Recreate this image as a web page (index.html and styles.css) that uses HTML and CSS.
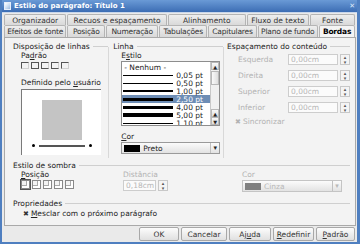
FILE: index.html
```html
<!DOCTYPE html>
<html lang="pt">
<head>
    <meta charset="UTF-8">
    <title>Estilo do parágrafo</title>
    <link rel="stylesheet" href="styles.css">
</head>
<body>
    <div class="window">
        <div class="titlebar">
            <span class="app-icon"></span>
            <span class="title">Estilo do parágrafo: Título 1</span>
            <span class="close">✕</span>
        </div>
        <div class="dialog">
            <div class="tabs">
                <div class="tab-row">
                    <div class="tab w1">Organizador</div>
                    <div class="tab w2">Recuos e espaçamento</div>
                    <div class="tab w3">Alinhamento</div>
                    <div class="tab w4">Fluxo de texto</div>
                    <div class="tab w5">Fonte</div>
                </div>
                <div class="tab-row">
                    <div class="tab v1">Efeitos de fonte</div>
                    <div class="tab v2">Posição</div>
                    <div class="tab v3">Numeração</div>
                    <div class="tab v4">Tabulações</div>
                    <div class="tab v5">Capitulares</div>
                    <div class="tab v6">Plano de fundo</div>
                    <div class="tab v7 active">Bordas</div>
                </div>
            </div>
            <div class="panel">
                <div class="top">
                    <div class="col col-lines">
                        <div class="group-title">Disposição de linhas</div>
                        <div class="sub">Pa<u>d</u>rão</div>
                        <div class="presets">
                            <span class="preset p1"></span>
                            <span class="preset p2"></span>
                            <span class="preset p3"></span>
                            <span class="preset p4"></span>
                            <span class="preset p5"></span>
                        </div>
                        <div class="sub">Definido pelo <u>u</u>suário</div>
                        <div class="preview">
                            <div class="paper"></div>
                            <div class="bottom-line"><i></i><b></b><i></i></div>
                        </div>
                    </div>
                    <div class="col col-style">
                        <div class="group-title">Linha</div>
                        <div class="sub">E<u>s</u>tilo</div>
                        <div class="listbox">
                            <div class="items">
                                <div class="item none">- Nenhum -</div>
                                <div class="item"><span class="ln" style="height:1px"></span><span>0,05 pt</span></div>
                                <div class="item"><span class="ln" style="height:1px"></span><span>0,50 pt</span></div>
                                <div class="item"><span class="ln" style="height:2px"></span><span>1,00 pt</span></div>
                                <div class="item sel"><span class="ln" style="height:3px"></span><span>2,50 pt</span></div>
                                <div class="item"><span class="ln" style="height:3px"></span><span>4,00 pt</span></div>
                                <div class="item"><span class="ln" style="height:4px"></span><span>5,00 pt</span></div>
                                <div class="item"><span class="ln" style="height:1px"></span><span>1,10 pt</span></div>
                            </div>
                            <div class="vscroll">
                                <span class="arr">▲</span>
                                <span class="thumb"></span>
                                <span class="grow"></span>
                                <span class="arr">▲</span>
                                <span class="arr">▼</span>
                            </div>
                        </div>
                        <div class="sub"><u>C</u>or</div>
                        <div class="combo">
                            <span class="swatch black"></span>
                            <span class="combo-text">Preto</span>
                            <span class="drop">▾</span>
                        </div>
                    </div>
                    <div class="col col-spacing">
                        <div class="group-title">Espaçamento do conteúdo</div>
                        <div class="field"><span class="lbl">Esquerda</span><span class="spin"><span class="val">0,00cm</span><span class="btns">▴<br>▾</span></span></div>
                        <div class="field"><span class="lbl">Direita</span><span class="spin"><span class="val">0,00cm</span><span class="btns">▴<br>▾</span></span></div>
                        <div class="field"><span class="lbl">Superior</span><span class="spin"><span class="val">0,00cm</span><span class="btns">▴<br>▾</span></span></div>
                        <div class="field"><span class="lbl">Inferior</span><span class="spin"><span class="val">0,00cm</span><span class="btns">▴<br>▾</span></span></div>
                        <div class="sync"><span class="check">✖</span>Sincronizar</div>
                    </div>
                </div>

                <div class="group-title wide">Estilo de sombra</div>
                <div class="shadow">
                    <div class="shadow-pos">
                        <div class="sub"><u>P</u>osição</div>
                        <div class="presets">
                            <span class="preset sh active"></span>
                            <span class="preset sh"></span>
                            <span class="preset sh"></span>
                            <span class="preset sh"></span>
                            <span class="preset sh"></span>
                        </div>
                    </div>
                    <div class="shadow-dist">
                        <div class="sub grey">Distância</div>
                        <span class="spin small"><span class="val">0,18cm</span><span class="btns">▴<br>▾</span></span>
                    </div>
                    <div class="shadow-color">
                        <div class="sub grey">Cor</div>
                        <div class="combo disabled">
                            <span class="swatch grey-sw"></span>
                            <span class="combo-text">Cinza</span>
                            <span class="drop">▾</span>
                        </div>
                    </div>
                </div>

                <div class="group-title wide">Propriedades</div>
                <div class="merge"><span class="check dark">✖</span><u>M</u>esclar com o próximo parágrafo</div>
            </div>
            <div class="buttons">
                <button class="btn ok">OK</button>
                <button class="btn b-cancel">Cancelar</button>
                <button class="btn">Aj<u>u</u>da</button>
                <button class="btn b-reset"><u>R</u>edefinir</button>
                <button class="btn b-default"><u>P</u>adrão</button>
            </div>
        </div>
    </div>
</body>
</html>
```

FILE: styles.css
```css
* {
    box-sizing: border-box;
}

body {
    margin: 0;
    width: 360px;
    height: 244px;
    overflow: hidden;
    font-family: "DejaVu Sans", sans-serif;
    font-size: 7.5px;
    color: #222;
}

u {
    text-decoration: underline;
}

.window {
    width: 360px;
    height: 244px;
    display: flex;
    flex-direction: column;
    background: #4f7fc0;
    padding: 0 3px 2px 2px;
}

.titlebar {
    height: 12px;
    display: flex;
    align-items: center;
    gap: 3px;
    padding-left: 2px;
    background: linear-gradient(#6a9ad6, #3c6db4);
    color: #fff;
    font-weight: bold;
    font-size: 7px;
}

.app-icon {
    width: 7px;
    height: 8px;
    background: linear-gradient(135deg, #fff 0%, #cfe0f4 50%, #9cb9de 100%);
    border: 1px solid #e6eefa;
}

.title {
    flex: 1;
}

.close {
    font-size: 7px;
    color: #dde8f7;
    padding-right: 2px;
}

.dialog {
    flex: 1;
    display: flex;
    flex-direction: column;
    background: #eaeaea;
    border-top: 1px solid #c8d6ea;
}

/* tabs */
.tabs {
    padding: 0 1px 0 2px;
}

.tab-row {
    display: flex;
    height: 12px;
}

.tab {
    flex-basis: 0;
    min-width: 0;
    overflow: hidden;
    text-align: center;
    line-height: 11px;
    background: linear-gradient(#eeeeee, #d9d9d9);
    border: 1px solid #b4b4b4;
    border-bottom: none;
    border-radius: 2px 2px 0 0;
    margin-right: 1px;
    white-space: nowrap;
    color: #333;
}

.tab-row:first-child .tab {
    margin-top: 1px;
}

.w1 { flex-grow: 62; }
.w2 { flex-grow: 100; }
.w3 { flex-grow: 78; }
.w4 { flex-grow: 62; }
.w5 { flex-grow: 44; }

.v1 { flex-grow: 64; }
.v2 { flex-grow: 38; }
.v3 { flex-grow: 53; }
.v4 { flex-grow: 49; }
.v5 { flex-grow: 49; }
.v6 { flex-grow: 62; }
.v7 { flex-grow: 36; }

.tab-row:last-child .tab {
    letter-spacing: -0.2px;
}

.tab.active {
    background: #f4f4f4;
    font-weight: bold;
    color: #000;
}

.panel {
    height: 189px;
    background: #f3f3f3;
    border: 1px solid #a9a9a9;
    margin: 0 1px 0 2px;
    padding: 3px 5px 0 8px;
}

.group-title {
    display: flex;
    align-items: center;
    gap: 3px;
    height: 10px;
    white-space: nowrap;
}

.group-title::after {
    content: "";
    flex: 1;
    border-top: 1px solid #cfcfcf;
}

.sub {
    height: 10px;
    line-height: 10px;
    margin-left: 8px;
}

.grey {
    color: #b2b2b2;
}

.top {
    display: flex;
    height: 117px;
}

.col-lines {
    width: 98px;
}

.col-style {
    width: 118px;
    border-left: 1px solid #d8d8d8;
    padding-left: 4px;
    margin-top: 6px;
}

.col-style .group-title,
.col-spacing .group-title {
    margin-top: -6px;
}

.col-spacing {
    flex: 1;
    border-left: 1px solid #d8d8d8;
    padding-left: 3px;
    margin-top: 6px;
}

.presets {
    display: flex;
    gap: 2px;
    margin: 0 0 8px 8px;
    height: 9px;
    align-items: center;
}

.preset {
    width: 8px;
    height: 7px;
    border: 1px solid #d0d0d0;
}

.p1 { border-color: #d0d0d0; border-left-color: #555; border-top-color: #555; }
.p2 { border-color: #555; }
.p3 { border-color: #555; border-right-color: #d0d0d0; }
.p4 { border-top-color: #555; border-left-color: #555; border-bottom-color: #555; }
.p5 { border-top-color: #555; border-left-color: #555; }

.preview {
    margin: 1px 0 0 8px;
    width: 80px;
    height: 66px;
    background: #fff;
    border-top: 1px solid #7a7a7a;
    border-left: 1px solid #7a7a7a;
    display: flex;
    flex-direction: column;
    align-items: center;
    padding-top: 10px;
}

.paper {
    width: 40px;
    height: 40px;
    background: #c4c4c4;
}

.bottom-line {
    display: flex;
    align-items: center;
    gap: 4px;
    margin-top: 4px;
}

.bottom-line i {
    width: 3px;
    height: 3px;
    background: #000;
    border-radius: 50%;
}

.bottom-line b {
    width: 46px;
    height: 2px;
    background: #555;
}

/* listbox */
.listbox {
    margin: 0 0 6px 8px;
    width: 99px;
    height: 65px;
    display: flex;
    background: #fff;
    border: 1px solid #8d8d8d;
    overflow: hidden;
}

.items {
    flex: 1;
    padding-top: 1px;
}

.item {
    height: 8px;
    display: flex;
    align-items: center;
    padding-left: 1px;
    gap: 3px;
    white-space: nowrap;
}

.item.none {
    padding-left: 2px;
}

.item.sel {
    background: #6d8db5;
    color: #fff;
}

.ln {
    width: 50px;
    background: #000;
}

.vscroll {
    width: 9px;
    display: flex;
    flex-direction: column;
    border-left: 1px solid #c8c8c8;
    background: #f0f0f0;
}

.arr {
    height: 8px;
    font-size: 5px;
    line-height: 8px;
    text-align: center;
    background: linear-gradient(#fafafa, #dcdcdc);
    border: 1px solid #b8b8b8;
}

.thumb {
    height: 14px;
    margin: 1px 0;
    background: linear-gradient(90deg, #fafafa, #dedede);
    border: 1px solid #b8b8b8;
}

.grow {
    flex: 1;
}

.combo {
    margin: 0 0 0 8px;
    width: 99px;
    height: 12px;
    display: flex;
    align-items: center;
    gap: 3px;
    padding-left: 2px;
    background: linear-gradient(#fbfbfb, #e2e2e2);
    border: 1px solid #9a9a9a;
}

.swatch {
    width: 16px;
    height: 7px;
}

.black {
    background: #000;
}

.grey-sw {
    background: #808080;
}

.combo-text {
    flex: 1;
}

.drop {
    width: 9px;
    height: 10px;
    font-size: 7px;
    line-height: 10px;
    text-align: center;
    border-left: 1px solid #c0c0c0;
}

.combo.disabled {
    color: #b8b8b8;
    border-color: #c4c4c4;
}

/* spacing */
.field {
    display: flex;
    align-items: center;
    height: 16px;
    padding-left: 11px;
}

.lbl {
    width: 50px;
    color: #b2b2b2;
}

.spin {
    display: flex;
    width: 62px;
    height: 11px;
}

.val {
    flex: 1;
    height: 11px;
    line-height: 10px;
    padding-left: 2px;
    background: #fbfbfb;
    border: 1px solid #cdcdcd;
    color: #b6b6b6;
}

.btns {
    width: 10px;
    margin-left: 2px;
    font-size: 5px;
    line-height: 5px;
    text-align: center;
    color: #555;
    border: 1px solid #c8c8c8;
    background: #f4f4f4;
}

.sync {
    padding-left: 8px;
    height: 14px;
    line-height: 14px;
    color: #b2b2b2;
}

.check {
    font-size: 7px;
    margin-right: 2px;
}

.check.dark {
    color: #333;
}

/* shadow */
.wide {
    margin-top: 2px;
}

.shadow {
    display: flex;
    height: 26px;
}

.shadow-pos {
    width: 110px;
}

.shadow .presets {
    margin-bottom: 0;
}

.preset.sh {
    width: 9px;
    height: 9px;
    border: 1px solid #888;
    box-shadow: inset -2px -2px 0 #fff, inset -3px -3px 0 #aaa;
}

.preset.sh.active {
    outline: 1px solid #555;
}

.shadow-dist {
    width: 119px;
}

.shadow-dist .sub {
    margin-left: 0;
}

.spin.small {
    width: 45px;
}

.shadow-color .sub {
    margin-left: 0;
}

.shadow-color .combo {
    margin-left: 0;
    width: 100px;
}

.merge {
    margin: 1px 0 0 10px;
    height: 10px;
    line-height: 10px;
}

/* buttons */
.buttons {
    flex: 1;
    display: flex;
    justify-content: flex-end;
    align-items: center;
    gap: 2px;
    padding-right: 2px;
}

.btn {
    font-family: inherit;
    font-size: 7.5px;
    height: 14px;
    width: 42px;
    padding: 0;
    color: #333;
    background: linear-gradient(#fcfcfc, #e0e0e0);
    border: 1px solid #a8a8a8;
    border-radius: 2px;
}

.btn.ok {
    width: 40px;
}

.btn.b-cancel {
    width: 46px;
}

.btn.b-reset {
    width: 41px;
}

.btn.b-default {
    width: 39px;
}
```
